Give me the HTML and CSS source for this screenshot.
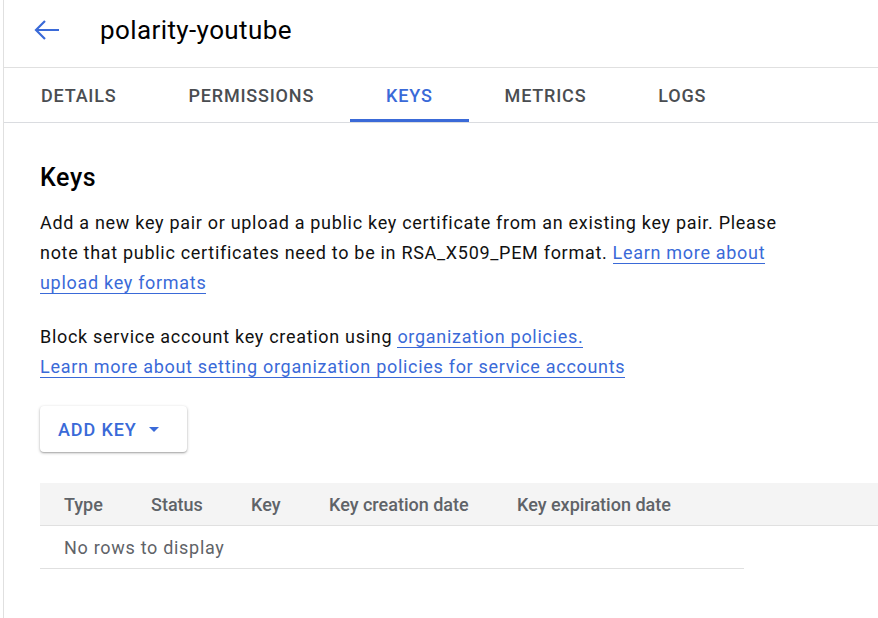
FILE: index.html
```html
<!DOCTYPE html>
<html>
<head>
<meta charset="utf-8">
<link rel="stylesheet" href="styles.css">
</head>
<body>
<div class="page">
  <header class="topbar">
    <svg class="back" width="26" height="24" viewBox="0 0 26 24"><path d="M25 12H2M11 3L2 12l9 9" fill="none" stroke="#3a6ad8" stroke-width="2.2"/></svg>
    <h1 class="title">polarity-youtube</h1>
  </header>
  <nav class="tabs">
    <div class="tab">DETAILS</div>
    <div class="tab">PERMISSIONS</div>
    <div class="tab active">KEYS</div>
    <div class="tab">METRICS</div>
    <div class="tab">LOGS</div>
  </nav>
  <main class="content">
    <h2 class="heading">Keys</h2>
    <p class="text">Add a new key pair or upload a public key certificate from an existing key pair. Please<br>note that public certificates need to be in RSA_X509_PEM format. <a class="link">Learn more about</a><br><a class="link">upload key formats</a></p>
    <p class="text second">Block service account key creation using <a class="link">organization policies.</a><br><a class="link">Learn more about setting organization policies for service accounts</a></p>
    <button class="addkey">ADD KEY <svg width="10" height="5" viewBox="0 0 10 5"><path d="M0 0h10L5 5z" fill="#3a6ad8"/></svg></button>
    <div class="table">
      <div class="thead">
        <div class="th c1">Type</div>
        <div class="th c2">Status</div>
        <div class="th c3">Key</div>
        <div class="th c4">Key creation date</div>
        <div class="th c5">Key expiration date</div>
      </div>
      <div class="row">No rows to display</div>
    </div>
  </main>
</div>
</body>
</html>
```
FILE: styles.css
```css
html, body { margin: 0; padding: 0; background: #fff; }
body { font-family: Roboto, "Liberation Sans", sans-serif; color: #202124; overflow: hidden; }
.page { margin-left: 3px; border-left: 1px solid #e0e0e0; min-height: 618px; }
.topbar { height: 68px; box-sizing: border-box; border-bottom: 1px solid #e0e0e0; display: flex; align-items: flex-start; }
.back { margin: 18px 0 0 30px; flex: none; }
.title { margin: 13px 0 0 40px; font-size: 26px; line-height: 34px; font-weight: 400; color: #000; letter-spacing: 0.4px; }
.tabs { display: flex; height: 54px; border-bottom: 1px solid #dadce0; padding-left: 1px; }
.tab { position: relative; display: flex; align-items: center; padding: 0 36px; font-size: 18px; font-weight: 500; color: #4a4d51; letter-spacing: 0.8px; }
.tab.active { color: #3a6ad8; }
.tab.active::after { content: ""; position: absolute; left: 0; right: 0; bottom: 0; height: 3px; background: #3a6ad8; }
.content { padding: 39px 0 0 36px; }
.heading { margin: 0; font-size: 25px; font-weight: 500; color: #000; line-height: 32px; letter-spacing: 0.6px; }
.text { margin: 14px 0 0; font-size: 18px; line-height: 30px; width: 800px; color: #111; letter-spacing: 0.7px; }
.text.second { margin-top: 24px; }
.link { color: #3a6ad8; text-decoration: none; border-bottom: 1px solid #3a6ad8; }
.addkey { margin-top: 24px; display: flex; align-items: center; gap: 12px; height: 46px; padding: 0 28px 0 18px; border: none; border-radius: 4px; background: #fff; font-family: Roboto, "Liberation Sans", sans-serif; font-size: 18px; font-weight: 500; letter-spacing: 0.9px; color: #3a6ad8; box-shadow: 0 1px 3px rgba(0,0,0,0.3), 0 1px 1px rgba(0,0,0,0.12); }
.table { margin-top: 31px; }
.thead { display: flex; height: 42px; align-items: center; background: #f4f4f4; border-bottom: 1px solid #e0e0e0; font-size: 18px; font-weight: 500; color: #5f6368; }
.th { padding-left: 24px; }
.c1 { width: 63px; }
.c2 { width: 76px; }
.c3 { width: 54px; }
.c4 { width: 164px; }
.row { height: 42px; display: flex; align-items: center; padding-left: 24px; border-bottom: 1px solid #e0e0e0; width: 680px; font-size: 18px; letter-spacing: 0.7px; color: #5f6368; }
```
